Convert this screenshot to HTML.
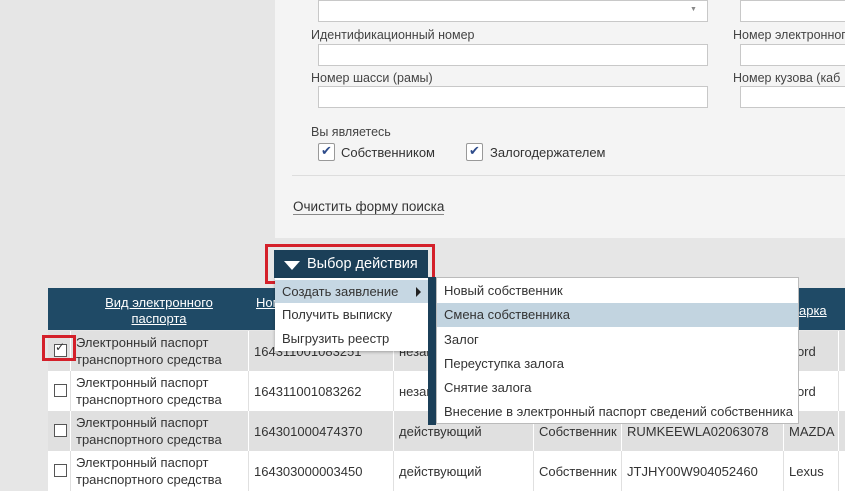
<!DOCTYPE html>
<html><head><meta charset="utf-8"><style>
body{margin:0;width:845px;height:491px;overflow:hidden;background:#e6e6e6;font-family:"Liberation Sans","DejaVu Sans",sans-serif;font-size:13px;color:#333;position:relative}
.a{position:absolute;white-space:nowrap}
.inp{position:absolute;background:#fff;border:1px solid #c8c8c8;height:20px}
.lbl{position:absolute;font-size:12.5px;color:#444;white-space:nowrap}
.cb{position:absolute;width:18px;height:18px;border:1px solid #999;background:#fff;border-radius:2px}
.row{position:absolute;left:48px;width:797px;height:40px}
.cell{position:absolute;top:0;height:100%;display:flex;align-items:center;padding-left:5px;box-sizing:border-box;border-left:1px solid #fff;line-height:17px;white-space:nowrap;overflow:hidden}
.sq{position:absolute;left:6px;top:13px;width:11px;height:11px;border:1px solid #555;background:#fff}
.mi{position:absolute;left:0;right:0;height:23px;line-height:23px;padding-left:7px;white-space:nowrap}
</style></head><body>
<div class="a" style="left:275px;top:0;width:570px;height:238px;background:#f4f4f4"></div>
<div class="inp" style="left:318px;top:0;width:388px;height:20px"></div>
<div class="a" style="left:690px;top:6px;font-size:7px;color:#888">▼</div>
<div class="inp" style="left:740px;top:0;width:110px"></div>
<div class="lbl" style="left:311px;top:28px">Идентификационный номер</div>
<div class="lbl" style="left:733px;top:28px">Номер электронного</div>
<div class="inp" style="left:318px;top:44px;width:388px"></div>
<div class="inp" style="left:740px;top:44px;width:110px"></div>
<div class="lbl" style="left:311px;top:71px">Номер шасси (рамы)</div>
<div class="lbl" style="left:733px;top:71px">Номер кузова (каб</div>
<div class="inp" style="left:318px;top:86px;width:388px"></div>
<div class="inp" style="left:740px;top:86px;width:110px"></div>
<div class="lbl" style="left:311px;top:125px">Вы являетесь</div>
<div class="cb" style="left:318px;top:143px;width:15px;height:16px"><span style="position:absolute;left:2px;top:-1px;color:#2d4b8a;font-size:13px;font-weight:bold">✔</span></div>
<div class="lbl" style="left:341px;top:145px;font-size:13px;color:#333">Собственником</div>
<div class="cb" style="left:466px;top:143px;width:15px;height:16px"><span style="position:absolute;left:2px;top:-1px;color:#2d4b8a;font-size:13px;font-weight:bold">✔</span></div>
<div class="lbl" style="left:490px;top:145px;font-size:13px;color:#333">Залогодержателем</div>
<div class="a" style="left:292px;top:175px;width:553px;height:1px;background:#ddd"></div>
<div class="a" style="left:293px;top:199px;font-size:13.5px;color:#333;border-bottom:1px solid #888;line-height:15px">Очистить форму поиска</div>

<div class="a" style="left:48px;top:288px;width:797px;height:42px;background:#1f4a66;color:#fff"></div>
<div class="a" style="left:70px;top:295px;width:178px;text-align:center;color:#fff;text-decoration:underline;line-height:16px;font-size:13px">Вид электронного<br>паспорта</div>
<div class="a" style="left:256px;top:295px;color:#fff;text-decoration:underline">Ном</div>
<div class="a" style="left:799px;top:303px;color:#fff;text-decoration:underline">арка</div>

<div class="row" style="top:331px;background:#e0e0e0">
<div class="sq"></div><span class="a" style="left:7px;top:9px;font-size:12px">✓</span>
<div class="cell" style="left:22px;width:178px">Электронный паспорт<br>транспортного средства</div>
<div class="cell" style="left:200px;width:145px">164311001083251</div>
<div class="cell" style="left:345px;width:140px">незав</div>
<div class="cell" style="left:735px;width:55px">Ford</div>
<div class="cell" style="left:790px;width:10px"></div>
</div>
<div class="row" style="top:371px;background:#fff">
<div class="sq"></div>
<div class="cell" style="left:22px;width:178px;border-color:#e0e0e0">Электронный паспорт<br>транспортного средства</div>
<div class="cell" style="left:200px;width:145px;border-color:#e0e0e0">164311001083262</div>
<div class="cell" style="left:345px;width:140px;border-color:#e0e0e0">незав</div>
<div class="cell" style="left:735px;width:55px;border-color:#e0e0e0">Ford</div>
<div class="cell" style="left:790px;width:10px;border-color:#e0e0e0"></div>
</div>
<div class="row" style="top:411px;background:#e0e0e0">
<div class="sq"></div>
<div class="cell" style="left:22px;width:178px">Электронный паспорт<br>транспортного средства</div>
<div class="cell" style="left:200px;width:145px">164301000474370</div>
<div class="cell" style="left:345px;width:140px">действующий</div>
<div class="cell" style="left:485px;width:88px">Собственник</div>
<div class="cell" style="left:573px;width:162px">RUMKEEWLA02063078</div>
<div class="cell" style="left:735px;width:55px">MAZDA</div>
<div class="cell" style="left:790px;width:10px"></div>
</div>
<div class="row" style="top:451px;background:#fff">
<div class="sq"></div>
<div class="cell" style="left:22px;width:178px;border-color:#e0e0e0">Электронный паспорт<br>транспортного средства</div>
<div class="cell" style="left:200px;width:145px;border-color:#e0e0e0">164303000003450</div>
<div class="cell" style="left:345px;width:140px;border-color:#e0e0e0">действующий</div>
<div class="cell" style="left:485px;width:88px;border-color:#e0e0e0">Собственник</div>
<div class="cell" style="left:573px;width:162px;border-color:#e0e0e0">JTJHY00W904052460</div>
<div class="cell" style="left:735px;width:55px;border-color:#e0e0e0">Lexus</div>
<div class="cell" style="left:790px;width:10px;border-color:#e0e0e0"></div>
</div>
<div class="a" style="left:43px;top:336px;width:28px;height:20px;border:3px solid #d4202a;margin:-1px"></div>

<div class="a" style="left:265px;top:244px;width:164px;height:34px;border:3px solid #d4202a"></div>
<div class="a" style="left:274px;top:250px;width:154px;height:28px;background:#1b3f58;color:#fff;font-size:14.5px;line-height:28px"><span style="position:absolute;left:10px;top:11px;width:0;height:0;border-left:8px solid transparent;border-right:8px solid transparent;border-top:9px solid #fff"></span><span style="position:absolute;left:33px">Выбор действия</span></div>

<div class="a" style="left:275px;top:278px;width:160px;height:73px;background:#fff;box-shadow:0 1px 3px rgba(0,0,0,.3)">
<div class="mi" style="top:2px;background:#c6d7e3">Создать заявление<span style="position:absolute;left:141px;top:7px;border-top:5px solid transparent;border-bottom:5px solid transparent;border-left:5px solid #222"></span></div>
<div class="mi" style="top:25px">Получить выписку</div>
<div class="mi" style="top:49px">Выгрузить реестр</div>
</div>
<div class="a" style="left:428px;top:277px;width:8px;height:148px;background:#1b3f58"></div>
<div class="a" style="left:436px;top:277px;width:363px;height:147px;background:#fff;border:1px solid #bbb;box-sizing:border-box">
<div class="mi" style="top:1px">Новый собственник</div>
<div class="mi" style="top:25px;background:#c2d4e0;height:24px">Смена собственника</div>
<div class="mi" style="top:50px">Залог</div>
<div class="mi" style="top:74px">Переуступка залога</div>
<div class="mi" style="top:98px">Снятие залога</div>
<div class="mi" style="top:122px">Внесение в электронный паспорт сведений собственника</div>
</div>
</body></html>
